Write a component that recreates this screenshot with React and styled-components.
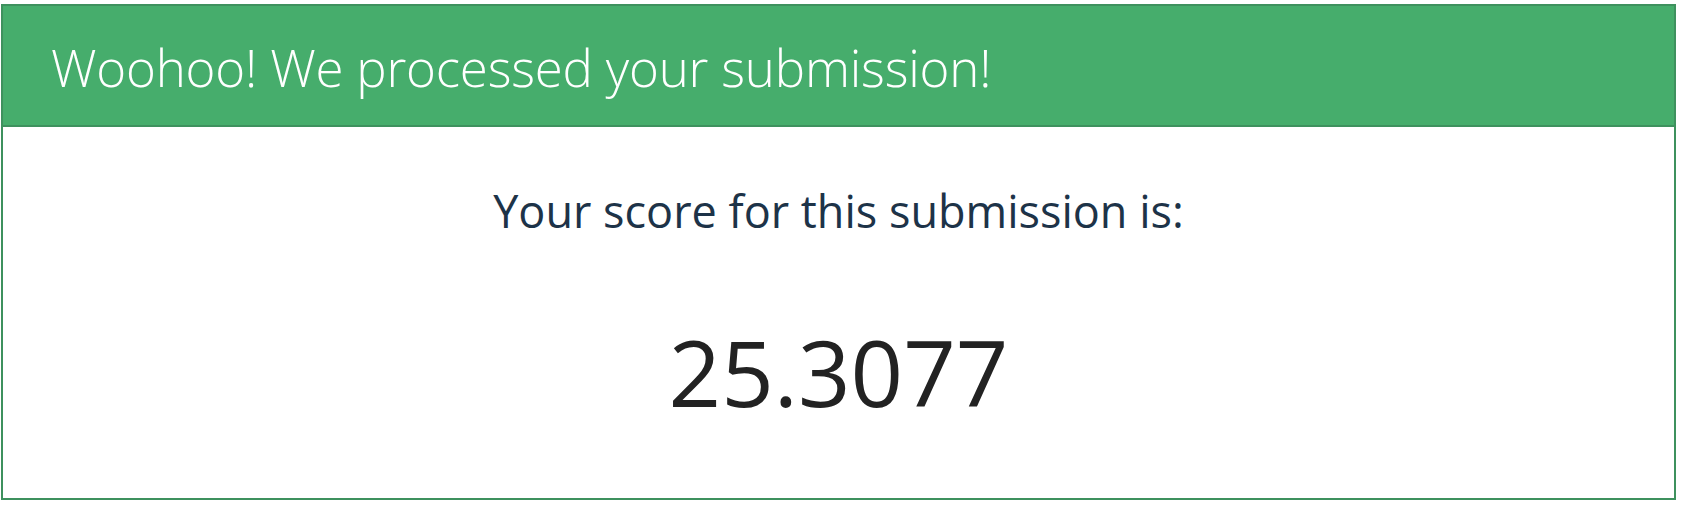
import React from "react";
import styled, { createGlobalStyle } from "styled-components";

const Global = createGlobalStyle`
  html, body { margin: 0; padding: 0; background: #ffffff; }
  body { font-family: "Open Sans", "Liberation Sans", sans-serif; }
`;

const Panel = styled.section`
  box-sizing: border-box;
  margin: 4px 10px 0 1px;
  height: 496px;
  border: 2px solid #3e915e;
  display: flex;
  flex-direction: column;
  background: #ffffff;
`;

const Header = styled.header`
  box-sizing: border-box;
  height: 121px;
  background: #46ad6c;
  border-bottom: 2px solid #3e915e;
  display: flex;
  align-items: center;
  padding: 3px 0 0 48px;
`;

const Title = styled.h1`
  margin: 0;
  font-family: "Open Sans", sans-serif;
  font-weight: 300;
  font-size: 51px;
  line-height: 64px;
  color: #ffffff;
  letter-spacing: -0.2px;
`;

const Body = styled.div`
  flex: 1;
  display: flex;
  flex-direction: column;
  align-items: center;
  padding-top: 53px;
`;

const Label = styled.p`
  margin: 0;
  font-family: "Open Sans", sans-serif;
  font-size: 45px;
  line-height: 62px;
  color: #1d3348;
`;

const Score = styled.p`
  margin: 80px 0 0;
  font-family: "Open Sans", sans-serif;
  font-size: 92px;
  line-height: 100px;
  color: #222222;
`;

export default function App() {
  return (
    <>
      <Global />
      <Panel>
        <Header>
          <Title>Woohoo! We processed your submission!</Title>
        </Header>
        <Body>
          <Label>Your score for this submission is:</Label>
          <Score>25.3077</Score>
        </Body>
      </Panel>
    </>
  );
}
